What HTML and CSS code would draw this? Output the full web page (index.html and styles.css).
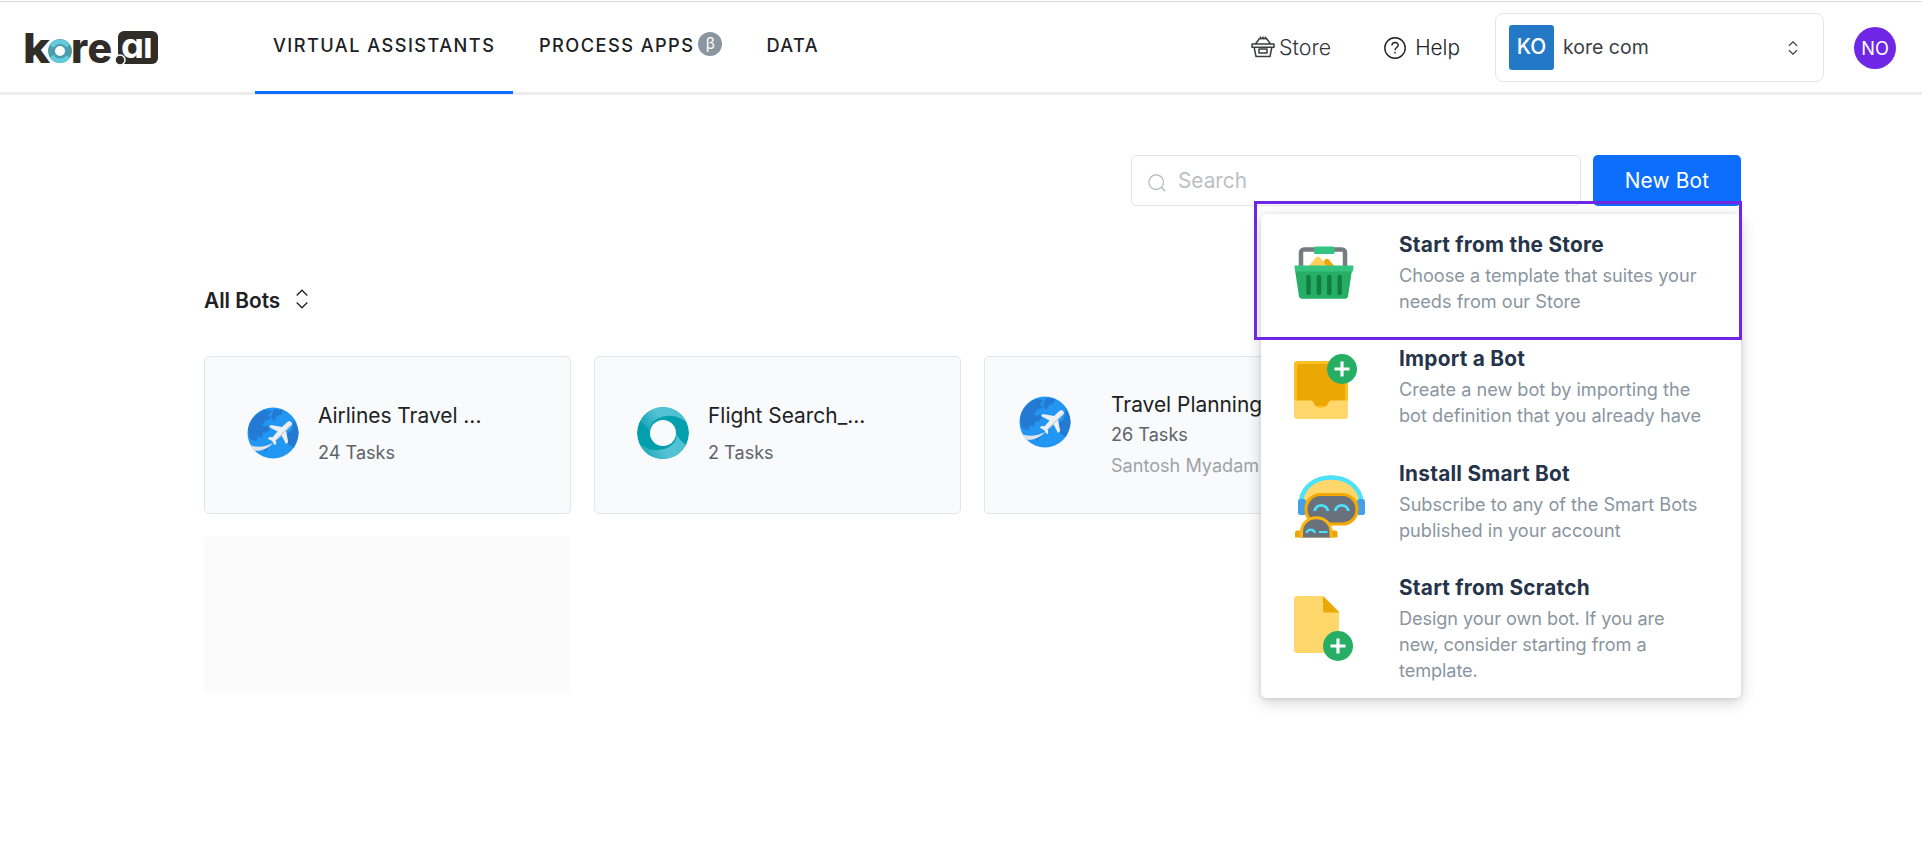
FILE: index.html
```html
<!DOCTYPE html>
<html lang="en">
<head>
<meta charset="utf-8">
<title>Kore.ai Bot Builder</title>
<link rel="stylesheet" href="styles.css">
</head>
<body>
<svg class="defs" width="0" height="0" aria-hidden="true">
  <defs>
    <linearGradient id="ringTop" x1="0" y1="0.6" x2="1" y2="0.2"><stop offset="0" stop-color="#1aa5b4"/><stop offset="0.45" stop-color="#55c3d6"/><stop offset="1" stop-color="#4cc0d2"/></linearGradient>
    <clipPath id="globeClip"><circle cx="26" cy="26" r="25.5"/></clipPath>
    <clipPath id="ringClip"><circle cx="26" cy="26" r="26"/></clipPath>
    <symbol id="globe" viewBox="0 0 52 52">
      <circle cx="26" cy="26" r="25.5" fill="#2196f3"/>
      <g clip-path="url(#globeClip)">
        <path d="M1 22C3 12 10 6 17 3l8 1-4 4 3 4-5 1-4 5 3 2 3-2 2 4-4 4-3-1-1 6-4-2-2 5-6-2z" fill="#2479d2"/>
        <path d="M27 2l9 1-2 5-4 1-3 5-3-4zM47 12l6 14-6 15-6-4-1-10 5-4zM14 40l8-3-3 8z" fill="#2479d2"/>
        <path d="M0 36C8 42 17 40 26 36C20 43 10 46 3 42z" fill="#e2e5e8"/>
      </g>
      <path d="M44.5 15.5c1 1 .3 2.700-.8 3.800l-4.700 4.800 2.200 11-2.200 2-4.400-8.500-5.600 4.900.2 3.500-1.500 1.300-2.600-4.300-4.200-2.300 1.500-1.600 3.200.1 5-5.800-8.700-4.300 2-2.200 11.200 2 5.100-4.800c1.200-1.100 3.300-1.100 4.300.4z" fill="#edf0f3"/>
      <path d="M43.500 18.500L28 34" stroke="#b9c3cd" stroke-width="1"/>
    </symbol>
    <symbol id="ring" viewBox="0 0 52 52">
      <g clip-path="url(#ringClip)">
        <circle cx="26" cy="26" r="26" fill="#049fad"/>
        <path d="M3 14L14 0H40L52 18C43 8 31 7 22 11C15 14 11 20 13 26C11 21 8 18 3 14z" fill="url(#ringTop)"/>
        <path d="M49 38L38 52H12L0 34C9 44 21 45 30 41C37 38 41 32 39 26C41 31 44 34 49 38z" fill="url(#ringTop)"/>
      </g>
      <circle cx="26" cy="26" r="13" fill="#f8fafc"/>
    </symbol>
    <symbol id="updown" viewBox="0 0 12 20">
      <path d="M.7 6.500L6 1.200l5.300 5.300M.7 13.500L6 18.800l5.300-5.300" fill="none" stroke="currentColor" stroke-width="1.300"/>
    </symbol>
  </defs>
</svg>

<header class="topbar">
  <svg class="logo" viewBox="0 0 136 36" width="136" height="36" role="img" aria-label="kore.ai">
    <text class="logo-text" x="-2" y="32" textLength="27" lengthAdjust="spacingAndGlyphs">k</text>
    <circle cx="35" cy="20" r="8.500" fill="#fff" stroke="#4b9fad" stroke-width="7"/>
    <path d="M27 15.500A9.400 9.400 0 0 1 43 15" fill="none" stroke="#62cbdc" stroke-width="4.500"/>
    <path d="M43 25.500A9.400 9.400 0 0 1 27 25" fill="none" stroke="#62cbdc" stroke-width="4.500"/>
    <text class="logo-text" x="46" y="32">r</text>
    <text class="logo-text" x="62.500" y="32">e</text>
    <rect x="93" y="0" width="40" height="33" rx="6" fill="#302c27"/>
    <circle cx="95" cy="29" r="5" fill="#302c27" stroke="#fff" stroke-width="1.500"/>
    <text class="logo-ai" x="96" y="26.500" textLength="23" lengthAdjust="spacingAndGlyphs">a</text>
    <text class="logo-i" x="119" y="26.500">I</text>
  </svg>
  <nav class="nav">
    <a class="nav-item active">VIRTUAL ASSISTANTS</a>
    <a class="nav-item">PROCESS APPS<span class="beta">β</span></a>
    <a class="nav-item">DATA</a>
  </nav>
  <div class="actions">
    <a class="action store">
      <svg width="24" height="22" viewBox="0 0 24 22" fill="none" stroke="#3a3d42" stroke-width="1.500" stroke-linejoin="round">
        <path d="M1 8h22v3.300H1zM3.200 11.500L5 20.500h14l1.800-9M4.500 8L8.500 2.500M19.500 8L15.500 2.500M8 2.500h8M9.500 .5v3M12 .5v3M14.500 .5v3M8 13h8v4H8z"/>
      </svg>
      <span>Store</span>
    </a>
    <a class="action help">
      <svg width="22" height="22" viewBox="0 0 22 22" fill="none" stroke="#202124" stroke-width="1.400">
        <circle cx="11" cy="11" r="10.200"/>
        <path d="M7.900 8.500c0-4 6.300-4 6.300-.3 0 2.300-3.200 2.400-3.200 5M11 14.800v1.700"/>
      </svg>
      <span>Help</span>
    </a>
    <div class="org">
      <span class="org-badge">KO</span>
      <span class="org-name">kore com</span>
      <svg class="org-arrows" width="10" height="14" viewBox="0 0 10 14"><path d="M1 4.700L5 .8l4 3.900M1 9.300l4 3.900 4-3.900" fill="none" stroke="currentColor" stroke-width="1.200"/></svg>
    </div>
    <span class="avatar">NO</span>
  </div>
</header>

<main class="content">
  <div class="toolbar">
    <div class="search">
      <svg width="18" height="18" viewBox="0 0 18 18" fill="none" stroke="#b4b8be" stroke-width="1.300"><circle cx="8.200" cy="8.200" r="7.300"/><path d="M13.200 13.200l4 4"/></svg>
      <span>Search</span>
    </div>
    <button class="new-bot">New Bot</button>

    <div class="menu">
      <div class="menu-item">
        <svg class="menu-icon" viewBox="0 0 80 80">
          <path d="M11 36V20.500a3 3 0 0 1 3-3h38a3 3 0 0 1 3 3V36" fill="none" stroke="#757b80" stroke-width="4.500"/>
          <rect x="24" y="14.500" width="20.500" height="7.500" rx="1.500" fill="#35c47f"/>
          <path d="M29 35l6-7.200a2.500 2.500 0 0 1 4 0l6 7.200z" fill="#eba703"/>
          <path d="M18 35l8-9.500a2.500 2.500 0 0 1 4 0l8 9.500z" fill="#ffcf5b"/>
          <path d="M5 38h57l-4 26.500a3 3 0 0 1-3 2.300H12a3 3 0 0 1-3-2.300z" fill="#25ae64"/>
          <path d="M5.500 33.500h57a1 1 0 0 1 1 1l-.6 5H5.100l-.6-5a1 1 0 0 1 1-1z" fill="#35c47f"/>
          <path d="M18.500 45v16M29 45v16M39.300 45v16M49.700 45v16" stroke="#117e43" stroke-width="4.500" stroke-linecap="round"/>
        </svg>
        <div><h3>Start from the Store</h3><p>Choose a template that suites your<br>needs from our Store</p></div>
      </div>
      <div class="menu-item">
        <svg class="menu-icon" viewBox="0 0 80 80">
          <rect x="4" y="15" width="54" height="55" rx="3" fill="#fdbf26"/>
          <path d="M7 20a2 2 0 0 1 2-2h44a2 2 0 0 1 2 2v40H7z" fill="#eba703"/>
          <path d="M4 54.500h17.500c2.500 0 2 7.500 9.500 7.500s7-7.500 9.500-7.500H58V70a3 3 0 0 1-3 3H7a3 3 0 0 1-3-3z" fill="#ffd76b"/>
          <circle cx="52" cy="23" r="15" fill="#25ae64"/>
          <path d="M52 15.500v15M44.500 23h15" stroke="#fff" stroke-width="3.200"/>
        </svg>
        <div><h3>Import a Bot</h3><p>Create a new bot by importing the<br>bot definition that you already have</p></div>
      </div>
      <div class="menu-item">
        <svg class="menu-icon" viewBox="0 0 80 80">
          <path d="M13 43C13 5 70 5 70 43V50H13z" fill="#ffd76b"/>
          <path d="M11 40C15 8.500 67 8.500 71.500 40" fill="none" stroke="#4ce1fa" stroke-width="4.500"/>
          <rect x="8" y="38" width="8" height="16" rx="2.500" fill="#439fe8"/>
          <rect x="67" y="38" width="8" height="16" rx="2.500" fill="#439fe8"/>
          <rect x="16" y="33.500" width="51" height="29.500" rx="14.500" fill="#69717d" stroke="#f4a900" stroke-width="3.200"/>
          <path d="M24.500 50c2-7.500 11.500-7.500 13.500 0M45 50c2-7.500 11.500-7.500 13.500 0" fill="none" stroke="#4ce1fa" stroke-width="2.800"/>
          <path d="M5 76.500v-5a2 2 0 0 1 2-2h38.500a2 2 0 0 1 2 2v5z" fill="#eba703"/>
          <path d="M11.500 76.500V71c0-19 29.500-19 29.500 0v5.500z" fill="#69717d"/>
          <path d="M11.500 76.500V71c0-19 29.500-19 29.500 0v5.500" fill="none" stroke="#ffb511" stroke-width="3"/>
          <path d="M16.500 72c1.500-4.500 7-4.500 8.500 0M29 71h8.500" fill="none" stroke="#4ce1fa" stroke-width="2.200"/>
        </svg>
        <div><h3>Install Smart Bot</h3><p>Subscribe to any of the Smart Bots<br>published in your account</p></div>
      </div>
      <div class="menu-item">
        <svg class="menu-icon" viewBox="0 0 80 80">
          <path d="M7 21h26l16 16v38a3 3 0 0 1-3 3H7a3 3 0 0 1-3-3V24a3 3 0 0 1 3-3z" fill="#ffd76b"/>
          <path d="M33 21l16.500 16.500H35a2 2 0 0 1-2-2z" fill="#eba703"/>
          <circle cx="48" cy="71" r="15" fill="#25ae64"/>
          <path d="M48 63.500v15M40.500 71h15" stroke="#fff" stroke-width="3.200"/>
        </svg>
        <div><h3>Start from Scratch</h3><p class="tight">Design your own bot. If you are<br>new, consider starting from a<br>template.</p></div>
      </div>
      <div class="highlight"></div>
    </div>
  </div>

  <div class="filter"><span>All Bots</span><svg width="12" height="20"><use href="#updown"/></svg></div>

  <section class="cards">
    <article class="card">
      <svg class="bot-icon"><use href="#globe"/></svg>
      <div><h4>Airlines Travel ...</h4><p class="tasks">24 Tasks</p></div>
    </article>
    <article class="card">
      <svg class="bot-icon"><use href="#ring"/></svg>
      <div><h4>Flight Search_...</h4><p class="tasks">2 Tasks</p></div>
    </article>
    <article class="card shared">
      <svg class="bot-icon"><use href="#globe"/></svg>
      <div><h4>Travel Planning</h4><p class="tasks">26 Tasks</p><p class="owner">Santosh Myadam</p></div>
    </article>
    <article class="card blank"></article>
  </section>
</main>
</body>
</html>
```
FILE: styles.css
```css
* { box-sizing: border-box; }
body {
  margin: 0;
  height: 856px;
  overflow: hidden;
  background: #fff;
  color: #202124;
  font-family: Inter, "Liberation Sans", sans-serif;
  font-size: 20.8px;
}
h3, h4, p { margin: 0; font-weight: 400; }
svg { display: block; flex: none; overflow: visible; }
.defs { position: absolute; }

.topbar {
  display: flex;
  height: 95px;
  padding: 0 26px 0 25px;
  border-top: 1px solid #fff;
  border-bottom: 3px solid #ededed;
  box-shadow: inset 0 1px #d9dbdd;
}
.logo { margin-top: 30px; }
.logo-text { font-size: 41px; font-weight: 800; fill: #302c27; }
.logo-ai { font-size: 35px; font-weight: 700; fill: #fff; font-feature-settings: "cv11"; }
.logo-i { font-size: 26.500px; font-weight: 900; fill: #fff; }

.nav { display: flex; margin-left: 94px; height: 93px; }
.nav-item {
  display: flex;
  align-items: flex-start;
  padding: 32px 18px 0;
  margin-right: 8px;
  font-size: 18.2px;
  line-height: 24px;
  font-weight: 500;
  letter-spacing: 1.45px;
  white-space: nowrap;
}
.nav-item.active { width: 258px; border-bottom: 3px solid #0d6efd; }
.beta {
  width: 24px;
  height: 24px;
  margin: -1px 0 0 4px;
  border-radius: 50%;
  background: #8a959f;
  color: #fff;
  font-size: 15.5px;
  font-weight: 400;
  letter-spacing: 0;
  text-align: center;
}

.actions { display: flex; align-items: center; margin-left: auto; height: 93px; }
.action { display: flex; align-items: center; font-weight: 300; }
.store { gap: 5px; margin-right: 52px; color: #33363a; font-size: 21.4px; }
.store span { margin: 0 1px 1px -1px; }
.store svg { margin: 0 0 2px -1px; }
.help { gap: 9px; margin-right: 35px; }
.org {
  display: flex;
  align-items: center;
  width: 329px;
  height: 69px;
  padding: 0 25px 0 13px;
  border: 1px solid #e3e5e7;
  border-radius: 8px;
  color: #3c4043;
}
.org-badge {
  width: 45px;
  height: 45px;
  margin-right: 9px;
  border-radius: 3px;
  background: #2479c6;
  color: #fff;
  font-weight: 500;
  line-height: 44px;
  text-align: center;
}
.org-name { padding-bottom: 2px; font-size: 19.5px; }
.org-arrows { margin-left: auto; }
.avatar {
  width: 42px;
  height: 42px;
  margin-left: 30px;
  border-radius: 50%;
  background: #7027e5;
  color: #fff;
  font-size: 18.2px;
  line-height: 42px;
  text-align: center;
}

.content { padding: 60px 181px 0 204px; }
.toolbar { position: relative; display: flex; justify-content: flex-end; gap: 12px; height: 51px; }
.search {
  display: flex;
  align-items: center;
  gap: 12px;
  width: 450px;
  padding-left: 16px;
  border: 1px solid #e4e5e7;
  border-radius: 5px;
  color: #bcbfc4;
}
.search svg { margin-top: 4px; }
.new-bot {
  width: 148px;
  padding: 0;
  border: 0;
  border-radius: 5px;
  background: #0d6efd;
  color: #fff;
  font: inherit;
  letter-spacing: 0.2px;
}

.menu {
  position: absolute;
  z-index: 1;
  top: 59px;
  right: 0;
  display: flex;
  flex-direction: column;
  gap: 32.500px;
  width: 480px;
  height: 484px;
  padding: 17.500px 0 0 29px;
  border-radius: 5px;
  background: #fff;
  box-shadow: 0 4px 16px rgba(0, 0, 0, 0.18), 0 1px 4px rgba(0, 0, 0, 0.1);
}
.menu-item { display: flex; align-items: flex-start; gap: 29px; white-space: nowrap; }
.menu-icon { width: 80px; height: 80px; }
.menu-item h3 {
  margin-bottom: 4px;
  color: #26344a;
  font-size: 20.8px;
  line-height: 26px;
  font-weight: 650;
  letter-spacing: 0.25px;
}
.menu-item p { color: #8a959f; font-size: 18.150px; line-height: 26px; }
.menu-item .tight { letter-spacing: -0.08px; }
.highlight {
  position: absolute;
  top: -13px;
  left: -7px;
  width: 488px;
  height: 139px;
  border: 3px solid #7027e5;
}

.filter { display: flex; align-items: center; gap: 16px; height: 26px; margin-top: 81px; font-weight: 600; }
.filter svg { margin-bottom: 2px; }

.cards { display: grid; grid-template-columns: repeat(4, 367px); gap: 22px 23px; margin-top: 43px; }
.card {
  display: flex;
  height: 158px;
  padding: 46px 0 0 42px;
  border: 1px solid #e3e6e9;
  border-radius: 5px;
  background: #f8fafc;
  white-space: nowrap;
}
.bot-icon { width: 52px; height: 52px; margin: 4px 19px 0 0; }
.card h4 { font-size: 20.9px; line-height: 26px; }
.tasks { margin-top: 10px; color: #5f6368; font-size: 18.1px; line-height: 26px; }
.owner { margin-top: 5px; color: #9fa3a8; font-size: 18.1px; line-height: 26px; }
.shared { padding: 35px 0 0 34px; }
.shared .bot-icon { margin-right: 40px; }
.shared .tasks { margin-top: 3px; }
.blank { grid-column: 1; border-color: #fbfbfb; background: #fbfbfb; }
```
